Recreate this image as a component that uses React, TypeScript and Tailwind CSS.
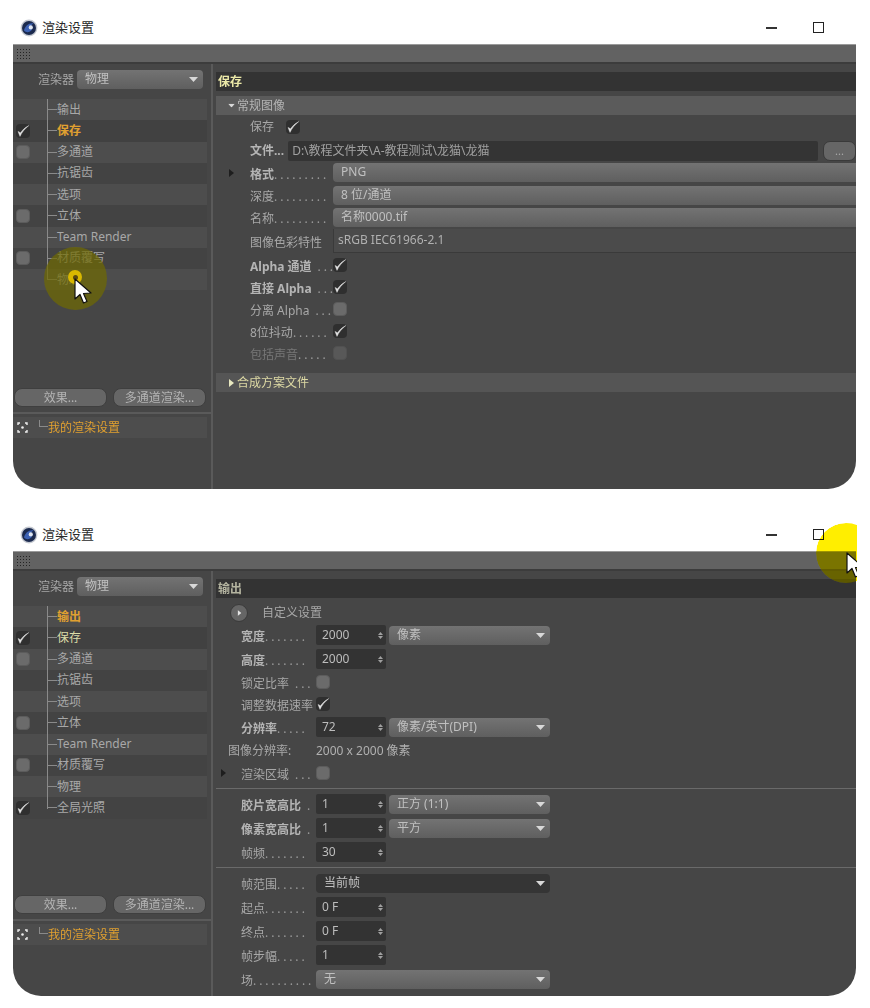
import React from "react";

const font = "font-['Noto_Sans','Noto_Sans_CJK_SC',sans-serif]";

function Check({ on = false, className = "" }: { on?: boolean; className?: string }) {
  return (
    <span className={`flex h-[14px] w-[14px] shrink-0 items-center justify-center rounded-[4px] ${on ? "bg-[#2f2f2f]" : "bg-[#6b6b6b] border border-[#5c5c5c]"} ${className}`}>
      {on && (
        <svg width="14" height="14" viewBox="0 0 14 14">
          <path d="M2 7.4 L4 12.4 C6 8.2 8.8 4.8 12.8 1.6 C9 3.6 6.4 6 4.6 8.8 Z" fill="#e2e2e2" stroke="#e2e2e2" strokeWidth="0.4" strokeLinejoin="round" />
        </svg>
      )}
    </span>
  );
}

function Caret({ dir = "down", className = "" }: { dir?: "down" | "right"; className?: string }) {
  return dir === "down" ? (
    <svg width="9" height="5" viewBox="0 0 9 5" className={`shrink-0 ${className}`}><path d="M0 0H9L4.5 5Z" fill="#d8d8d8" /></svg>
  ) : (
    <svg width="5" height="8" viewBox="0 0 5 8" className={`shrink-0 ${className}`}><path d="M0 0L5 4L0 8Z" fill="currentColor" /></svg>
  );
}

function Select({ value, dark = false, noCaret = false, className = "" }: { value: string; dark?: boolean; noCaret?: boolean; className?: string }) {
  return (
    <div className={`flex h-[19px] items-center justify-between rounded-[4px] pl-[8px] pr-[3px] text-[12px] leading-none text-[#c0c0c0] ${dark ? "bg-[#353535]" : "bg-gradient-to-b from-[#737373] to-[#5f5f5f]"} ${className}`}>
      <span className="-mt-[1px]">{value}</span>
      {!noCaret && <Caret className="mr-[2px]" />}
    </div>
  );
}

function NumInput({ value }: { value: string }) {
  return (
    <div className="flex h-[20px] w-[70px] shrink-0 items-center justify-between rounded-[2px] bg-[#333333] pl-[6px] pr-[3px] text-[12px] text-[#bdbdbd]">
      <span>{value}</span>
      <span className="flex flex-col gap-[1px]">
        <svg width="5" height="3" viewBox="0 0 5 3"><path d="M0 3L2.5 0L5 3Z" fill="#a0a0a0" /></svg>
        <svg width="5" height="3" viewBox="0 0 5 3"><path d="M0 0L2.5 3L5 0Z" fill="#a0a0a0" /></svg>
      </span>
    </div>
  );
}

function Label({ text, dots = "", bold = false, dim = false, className = "" }: { text: string; dots?: string; bold?: boolean; dim?: boolean; className?: string }) {
  return (
    <span className={`whitespace-nowrap text-[12px] leading-none ${bold ? "font-bold text-[#b4b4b4]" : dim ? "text-[#777777]" : "text-[#a8a8a8]"} ${className}`}>
      {text}
      {dots && <span className="font-normal tracking-[2.9px] text-[#9a9a9a]">{dots}</span>}
    </span>
  );
}

function Sidebar({ items }: { items: { t: string; c?: 0 | 1; color?: string }[] }) {
  return (
    <div className="flex h-full w-[200px] shrink-0 flex-col border-r-2 border-[#5a5a5a]">
      <div className="mt-[6px] flex h-[19px] items-center justify-end gap-[3px] pr-[8px]">
        <span className="text-[12px] text-[#a8a8a8]">渲染器</span>
        <Select value="物理" className="w-[126px]" />
      </div>
      <div className="relative mr-[4px] mt-[10px]">
        <div className="absolute bottom-[10px] left-[34px] top-0 w-[1px] bg-[#8a8a8a]" />
        {items.map((it, i) => (
          <div key={it.t} className={`flex h-[21.25px] items-center ${i === 1 ? "bg-[#414141]" : i % 2 === 0 ? "bg-[#4d4d4d]" : "bg-[#434343]"}`}>
            <span className="flex w-[34px] pl-[3px]">
              {it.c !== undefined && <Check on={it.c === 1} />}
            </span>
            <span className="h-[1px] w-[10px] bg-[#8a8a8a]" />
            <span className={`text-[12px] leading-none ${it.color ?? "text-[#a8a8a8]"}`}>{it.t}</span>
          </div>
        ))}
      </div>
      <div className="ml-[1px] mt-auto flex gap-[6px]">
        <button className="h-[19px] w-[93px] rounded-[8px] border border-[#3f3f3f] bg-[#666666] text-[12px] leading-none text-[#b4b4b4]">效果...</button>
        <button className="h-[19px] w-[93px] rounded-[8px] border border-[#3f3f3f] bg-[#666666] text-[12px] leading-none text-[#b4b4b4]">多通道渲染...</button>
      </div>
      <div className="mt-[5px] h-[2px] w-full bg-[#5a5a5a]" />
      <div className="mr-[4px] mt-[3px] flex h-[21px] items-center bg-[#4d4d4d] pl-[4px]">
        <svg width="11" height="11" viewBox="0 0 11 11" className="shrink-0">
          <path d="M1 3V1H3M8 1H10V3M10 8V10H8M3 10H1V8" stroke="#eeeeee" strokeWidth="1.4" fill="none" />
          <circle cx="5.5" cy="5.5" r="1.3" fill="#eeeeee" />
        </svg>
        <span className="mb-[8px] ml-[11px] h-[7px] w-[9px] border-b border-l border-[#8a8a8a]" />
        <span className="text-[12px] leading-none text-[#e0a030]">我的渲染设置</span>
      </div>
      <div className="h-[51px]" />
    </div>
  );
}

function Panel({ children }: { children: React.ReactNode }) {
  return (
    <div className="ml-[13px] h-[445px] w-[843px] overflow-hidden rounded-b-[28px] border-t border-[#9a9a9a] bg-[#464646] blur-[0.5px]">
      <div className="flex h-[19px] items-center border-b-2 border-[#3c3c3c] bg-[#626262] pl-[3px]">
        <span className="h-[12px] w-[15px] bg-[radial-gradient(#242424_1px,transparent_1px)] bg-[length:3px_3px]" />
      </div>
      <div className="flex h-[425px]">{children}</div>
    </div>
  );
}

function TitleBar() {
  return (
    <div className="ml-[20px] flex h-[27px] w-[804px] items-start pt-[2px]">
      <svg width="18" height="18" viewBox="0 0 18 18" className="shrink-0">
        <circle cx="9" cy="9" r="8.4" fill="#c4c8d0" />
        <circle cx="9" cy="9" r="7" fill="#1b2a4e" />
        <path d="M4 11.5C5 7 9 3.6 13.8 4.4C10.6 5.4 10.4 8.4 12 10.8C9.8 13.8 6 13.8 4 11.5Z" fill="#3d62b4" />
        <circle cx="10.8" cy="8.4" r="2.1" fill="#dfe6f2" />
      </svg>
      <span className="ml-[4px] text-[13px] leading-[17px] text-[#2a2a2a]">渲染设置</span>
      <span className="ml-auto mt-[8px] h-[1.5px] w-[11px] bg-[#333333]" />
      <span className="ml-[36px] mt-[3px] h-[11px] w-[11px] border-[1.5px] border-[#222222]" />
    </div>
  );
}

function Pointer({ className = "" }: { className?: string }) {
  return (
    <svg width="20" height="28" viewBox="0 0 20 28" className={className}>
      <path d="M1 1L1 21L6 16.5L9.5 25L13 23.5L9.5 15.5L17 15Z" fill="#ffffff" stroke="#111111" strokeWidth="1.2" strokeLinejoin="round" />
    </svg>
  );
}

function SavePane() {
  const row = "flex items-center pl-[34px]";
  const lead = "w-[83px] shrink-0";
  return (
    <div className="min-w-0 flex-1 pl-[3px] pt-[8px]">
      <div className="flex h-[19px] items-center bg-[#333333] pl-[2px] text-[12px] font-bold leading-none text-[#ece9a8]">保存</div>
      <div className="mt-[5px] flex h-[19px] items-center gap-[1px] bg-[#5b5b5b] pl-[11px] text-[12px] leading-none text-[#b4b4b4]"><Caret className="scale-75" />常规图像</div>
      <div className={`${row} mt-[1px] h-[22px]`}><Label text="保存" /><Check on className="ml-[12px]" /></div>
      <div className={`${row} h-[23px] pt-[2px]`}>
        <Label text="文件..." bold />
        <div className="ml-[4px] flex h-[20px] w-[530px] items-center rounded-[2px] bg-[#343434] pl-[4px] text-[12px] text-[#a0a0a0]">D:\教程文件夹\A-教程测试\龙猫\龙猫</div>
        <button className="ml-[5px] h-[20px] w-[33px] rounded-[7px] border border-[#3a3a3a] bg-[#666666] text-[11px] leading-none text-[#a8a8a8]">...</button>
      </div>
      <div className={`${row} relative h-[23px]`}>
        <Caret dir="right" className="absolute left-[13px] text-[#1e1e1e]" />
        <span className={lead}><Label text="格式" bold dots="........." /></span>
        <Select value="PNG" noCaret className="flex-1 rounded-r-none" />
      </div>
      <div className={`${row} h-[22px]`}><span className={lead}><Label text="深度" dots="........." /></span><Select value="8 位/通道" noCaret className="flex-1 rounded-r-none" /></div>
      <div className={`${row} h-[22px]`}><span className={lead}><Label text="名称" dots="........." /></span><Select value="名称0000.tif" noCaret className="flex-1 rounded-r-none" /></div>
      <div className={`${row} h-[25px]`}>
        <span className={lead}><Label text="图像色彩特性" /></span>
        <div className="flex h-[24px] flex-1 items-center border-b border-l border-[#3a3a3a] bg-[#4b4b4b] pl-[4px] text-[12px] text-[#b0b0b0]">sRGB IEC61966-2.1</div>
      </div>
      <div className={`${row} h-[23px]`}><span className={lead}><Label text="Alpha 通道" bold dots=" ..." /></span><Check on /></div>
      <div className={`${row} h-[22px]`}><span className={lead}><Label text="直接 Alpha" bold dots=" ..." /></span><Check on /></div>
      <div className={`${row} h-[22px]`}><span className={lead}><Label text="分离 Alpha" dots=" ..." /></span><Check /></div>
      <div className={`${row} h-[22px]`}><span className={lead}><Label text="8位抖动" dots="......" /></span><Check on /></div>
      <div className={`${row} h-[22px]`}><span className={lead}><Label text="包括声音" dim dots="....." /></span><Check className="opacity-50" /></div>
      <div className="mt-[9px] flex h-[19px] items-center gap-[3px] bg-[#555555] pl-[13px] text-[12px] leading-none text-[#ddd9a4]"><Caret dir="right" className="text-[#e8e8c0]" />合成方案文件</div>
    </div>
  );
}

function OutRow({ label, dots, bold, value, select }: { label: string; dots: string; bold?: boolean; value: string; select?: string }) {
  return (
    <div className="flex h-[24px] items-center pl-[25px]">
      <span className="w-[75px] shrink-0"><Label text={label} dots={dots} bold={bold} /></span>
      <NumInput value={value} />
      {select && <Select value={select} className="ml-[3px] w-[161px]" />}
    </div>
  );
}

function OutPane() {
  return (
    <div className="min-w-0 flex-1 pl-[3px] pt-[8px]">
      <div className="flex h-[19px] items-center bg-[#333333] pl-[2px] text-[12px] font-bold leading-none text-[#b4b4a0]">输出</div>
      <div className="mt-[4px] flex h-[21px] items-center pl-[14px]">
        <span className="flex h-[18px] w-[18px] items-center justify-center rounded-full border border-[#3a3a3a] bg-[#666666] text-[#e4e4e4]"><Caret dir="right" className="scale-75" /></span>
        <span className="ml-[14px] text-[12px] leading-none text-[#a8a8a8]">自定义设置</span>
      </div>
      <OutRow label="宽度" dots="......." bold value="2000" select="像素" />
      <OutRow label="高度" dots="......." bold value="2000" />
      <div className="flex h-[22px] items-center pl-[25px]"><span className="w-[75px]"><Label text="锁定比率" dots=" ..." /></span><Check /></div>
      <div className="flex h-[22px] items-center pl-[25px]"><span className="w-[75px]"><Label text="调整数据速率" /></span><Check on /></div>
      <OutRow label="分辨率" dots="....." bold value="72" select="像素/英寸(DPI)" />
      <div className="flex h-[22px] items-center pl-[12px] pt-[2px]">
        <span className="w-[88px] text-[12px] leading-none text-[#a8a8a8]">图像分辨率:</span>
        <span className="text-[12px] leading-none text-[#b0b0b0]">2000 x 2000 像素</span>
      </div>
      <div className="relative flex h-[23px] items-center pl-[25px]">
        <Caret dir="right" className="absolute left-[5px] text-[#1e1e1e]" />
        <span className="w-[75px]"><Label text="渲染区域" dots=" ..." /></span><Check />
      </div>
      <div className="mb-[3px] mt-[4px] h-[1px] bg-[#6a6a6a]" />
      <OutRow label="胶片宽高比" dots=" ." bold value="1" select="正方 (1:1)" />
      <OutRow label="像素宽高比" dots=" ." bold value="1" select="平方" />
      <OutRow label="帧频" dots="......." value="30" />
      <div className="mb-[3px] mt-[3px] h-[1px] bg-[#6a6a6a]" />
      <div className="flex h-[24px] items-center pl-[25px]">
        <span className="w-[75px] shrink-0"><Label text="帧范围" dots="....." /></span>
        <Select value="当前帧" dark className="w-[234px]" />
      </div>
      <OutRow label="起点" dots="......." value="0 F" />
      <OutRow label="终点" dots="......." value="0 F" />
      <OutRow label="帧步幅" dots="....." value="1" />
      <div className="flex h-[24px] items-center pl-[25px]">
        <span className="w-[75px] shrink-0"><Label text="场" dots=".........." /></span>
        <Select value="无" className="w-[234px]" />
      </div>
    </div>
  );
}

const base = [
  { t: "输出" },
  { t: "保存", c: 1 as const },
  { t: "多通道", c: 0 as const },
  { t: "抗锯齿" },
  { t: "选项" },
  { t: "立体", c: 0 as const },
  { t: "Team Render" },
  { t: "材质覆写", c: 0 as const },
  { t: "物理" },
];

export default function App() {
  const first = base.map((b) => (b.t === "保存" ? { ...b, color: "font-bold text-[#e0a030]" } : b));
  const second = [
    ...base.map((b) =>
      b.t === "输出" ? { ...b, color: "font-bold text-[#e0a030]" } : b.t === "保存" ? { ...b, color: "text-[#dcdca8]" } : b
    ),
    { t: "全局光照", c: 1 as const },
  ];
  return (
    <div className={`relative h-[1008px] w-[870px] overflow-hidden bg-white pt-[17px] ${font}`}>
      <TitleBar />
      <Panel>
        <Sidebar items={first} />
        <SavePane />
      </Panel>
      <div className="h-[35px]" />
      <TitleBar />
      <Panel>
        <Sidebar items={second} />
        <OutPane />
      </Panel>

      {/* click highlight and pointer, first window */}
      <div className="absolute left-[44px] top-[247px] h-[63px] w-[63px] rounded-full bg-[#6f6a00]/70" />
      <div className="absolute left-[68px] top-[270px] flex h-[14px] w-[14px] items-center justify-center rounded-full bg-[#d8b800]">
        <span className="h-[5px] w-[5px] rounded-full bg-[#5a4a10]" />
      </div>
      <Pointer className="absolute left-[74px] top-[278px]" />

      {/* highlight and pointer, second window */}
      <div className="absolute left-[816px] top-[523px] h-[60px] w-[41px] overflow-hidden rounded-l-[30px]">
        <div className="h-[60px] w-[60px] rounded-full bg-[#ffee00] mix-blend-multiply" />
      </div>
      <div className="absolute left-[816px] top-[551px] h-[32px] w-[40px] overflow-hidden">
        <div className="-mt-[28px] h-[60px] w-[60px] rounded-full bg-[#a8a000]/35" />
      </div>
      <div className="absolute left-[846px] top-[552px] h-[30px] w-[11px] overflow-hidden">
        <Pointer />
      </div>
    </div>
  );
}
